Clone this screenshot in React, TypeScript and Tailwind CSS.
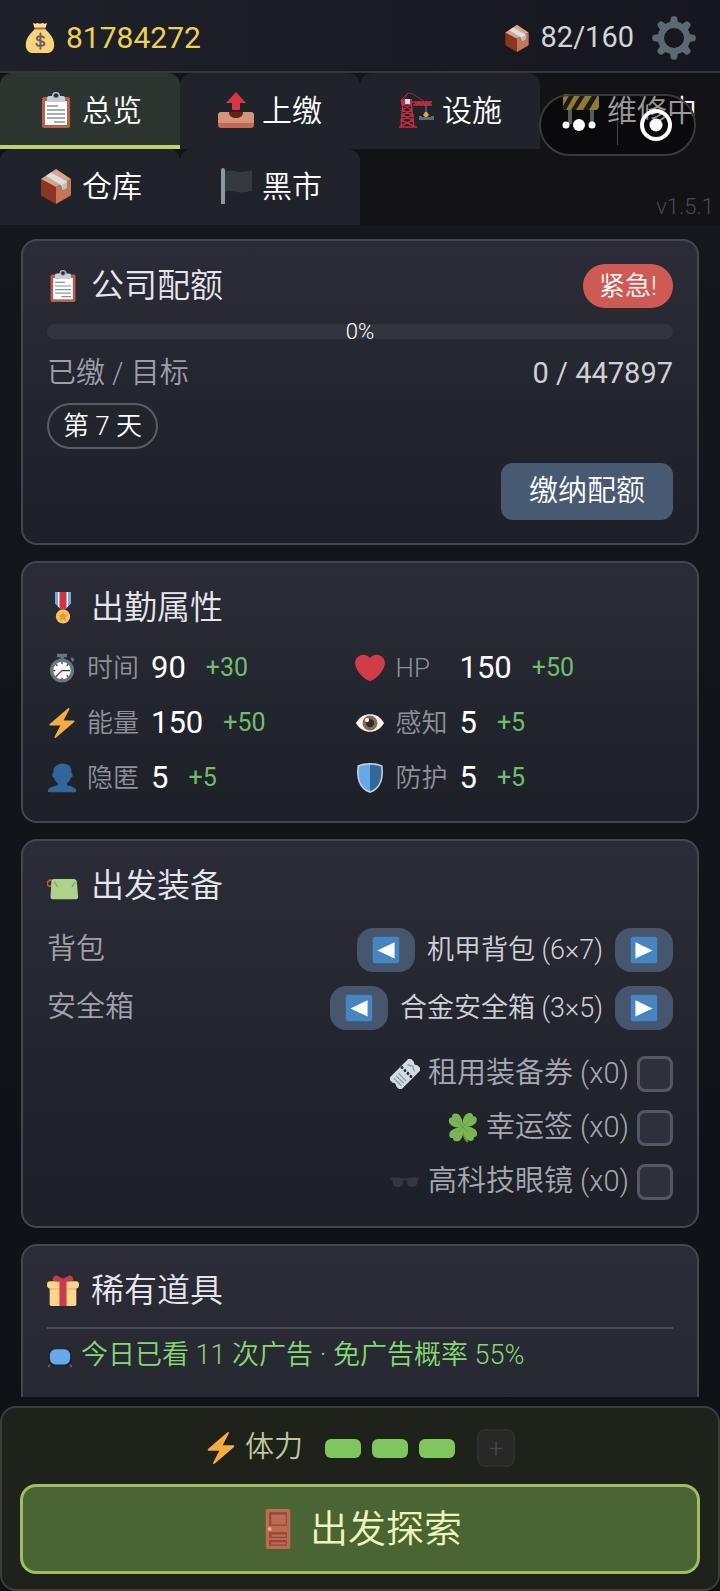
import type { ReactNode } from 'react';

type IconProps = { className?: string };

function Icon({ className = 'size-8', children }: IconProps & { children: ReactNode }) {
  return (
    <svg viewBox="0 0 36 36" className={`shrink-0 ${className}`} aria-hidden="true">
      {children}
    </svg>
  );
}

const MoneyBag = (p: IconProps) => (
  <Icon {...p}>
    <path fill="#F9D27E" d="M12 8C9 12 2 17 2 26c0 6 4 9 7 9h18c3 0 7-3 7-9 0-9-7-14-10-18z" />
    <path fill="#FFE0A0" d="M10 1l3 1 2-1 3 1 3-1 2 1 3-1-2 6H12z" />
    <path fill="#B5793C" d="M12 6h12v2.500H12z" />
    <path fill="none" stroke="#67645F" strokeWidth="2.200" strokeLinecap="round" d="M22.500 17.500c-1-2-8-2.500-8 1s8.500 2.200 8.500 5.800-8.500 3.400-9 .2M18.500 13v17" />
  </Icon>
);

const Package = (p: IconProps) => (
  <Icon {...p}>
    <path fill="#8A3624" d="M3 11l15 8v17L4 28c-.600-.4-1-1-1-2z" />
    <path fill="#C4765B" d="M33 11l-15 8v17l14-8c.6-.4 1-1 1-2z" />
    <path fill="#DDA283" d="M18 1l15 10-15 8L3 11z" />
    <path fill="#D6E0E8" d="M13 4.500L8 8l15 9 2 5 4-2.500v-6z" />
    <path fill="#B3C1CC" d="M24 17l5-3v5.500L25 22z" />
  </Icon>
);

const Gear = (p: IconProps) => (
  <Icon {...p}>
    <circle cx="18" cy="18" r="10.800" fill="none" stroke="#5C6973" strokeWidth="5.200" />
    {[0, 45, 90, 135, 180, 225, 270, 315].map((a) => (
      <path key={a} fill="#5C6973" d="M14.500 7l.8-5q.3-1.800 2-1.800h1.400q1.700 0 2 1.800l.8 5z" transform={`rotate(${a} 18 18)`} />
    ))}
  </Icon>
);

const Clipboard = (p: IconProps) => (
  <Icon {...p}>
    <rect x="4" y="5" width="28" height="31" rx="2" fill="#B86149" />
    <path fill="#fff" d="M7 9h22v24H7z" />
    <path fill="#C6CFD8" d="M25 4h-3a4 4 0 0 0-8 0h-3a2 2 0 0 0-2 2v4h18V6a2 2 0 0 0-2-2z" />
    <circle cx="18" cy="3.500" r="2.500" fill="#292F33" stroke="#8696A3" />
    <path stroke="#8395A3" strokeWidth="1.300" d="M9 14h11M9 18h18M9 22h18M9 26h18M16 30h11" />
  </Icon>
);

const Outbox = (p: IconProps) => (
  <Icon {...p}>
    <path fill="#D4937B" d="M0 23q0-3 3-3h30q3 0 3 3v10H0z" />
    <path fill="#BF6A52" d="M0 31h36v2q0 3-3 3H3q-3 0-3-3z" />
    <path fill="#662113" d="M11 20h14c0 4-3 6-7 6s-7-2-7-6z" />
    <path fill="#DA3446" d="M18 0l10 11h-6v6q0 1-1 1h-6q-1 0-1-1v-6H8z" />
  </Icon>
);

const Crane = (p: IconProps) => (
  <Icon {...p}>
    <path fill="none" stroke="#C42D3F" strokeWidth="1.400" d="M5 9L3 35M13 9l3 26M5 13l9 5M13 13l-9 5 11 5-12 5 13 6M14 18L4 23l11 5L3 34M5 10h29M15 13h19M17 10l2 3 2-3 2 3 2-3 2 3 2-3 2 3 2-3M1 35h18" />
    <path fill="none" stroke="#9B2A38" d="M5 9l5-8 5 1 12 8M10 1L2 9" />
    <path fill="#C42D3F" d="M3 7h11v6H3z" />
    <path fill="#D6DEE5" d="M7 7h5v5H7z" />
    <path stroke="#6B8294" d="M28 13v8" />
    <path fill="#E7A13D" d="M27 20h2l2 3-3 3-3-3z" />
    <path fill="#566B7B" d="M21 24h3v1h9v-1h3v4H21z" />
  </Icon>
);

const Barrier = (p: IconProps) => (
  <Icon {...p}>
    <path fill="#8899A6" d="M5 18h4v14H5zM27 18h4v14h-4z" />
    <rect y="2" width="36" height="16" rx="4" fill="#F2CC4D" />
    <path fill="#292F33" d="M7 2h5L3 18q-3-1-3-4zM18 2h5L13 18H8zM30 2h2q2 0 3 1l-9 15h-6z" />
  </Icon>
);

const BlackFlag = (p: IconProps) => (
  <Icon {...p}>
    <path fill="#8899A6" d="M3 2a2 2 0 0 1 4 0v33a1.500 1.500 0 0 1-4 0z" />
    <path fill="#34393D" d="M7 3c9-2 11 2 17 1 4-.6 6-1.500 10-2v21c-4 .4-6 1-10 1.500-6 .500-9-2.500-17-1z" />
  </Icon>
);

const Medal = (p: IconProps) => (
  <Icon {...p}>
    <path fill="#6BAEE5" d="M9 0h18v13l-6 6h-6l-6-6z" />
    <path fill="#fff" d="M12.500 0h11v16l-3 3h-5l-3-3z" />
    <path fill="#CF3547" d="M14 0h8v17l-1 2h-6l-1-2z" />
    <circle cx="18" cy="27.500" r="8" fill="#F7C263" />
    <path fill="#E59A3A" d="M18 22l1.600 3.700 4 .4-3 2.700.9 4-3.500-2.100-3.500 2.100.9-4-3-2.700 4-.4z" />
  </Icon>
);

const Stopwatch = (p: IconProps) => (
  <Icon {...p}>
    <path fill="#66757F" d="M12 1h12v4h-4v4h-4V5h-4zM28 7l2-2 3 3-2 3z" />
    <circle cx="18" cy="21" r="12.500" fill="#fff" stroke="#66757F" strokeWidth="4" />
    <path stroke="#292F33" strokeWidth="1.500" strokeLinecap="round" d="M18 21h9M18 11v1.500M18 30v1M8 21h1.500M11 14l1 1M25 14l-1 1M11 28l1-1M25 28l-1-1" />
    <path stroke="#DD2E44" strokeWidth="1.800" strokeLinecap="round" d="M18 21l-6 6" />
  </Icon>
);

const Heart = (p: IconProps) => (
  <Icon {...p}>
    <path fill="#D23B48" d="M35.885 11.833c0-5.45-4.418-9.868-9.867-9.868-3.308 0-6.227 1.633-8.018 4.129-1.791-2.496-4.71-4.129-8.017-4.129-5.45 0-9.868 4.417-9.868 9.868 0 .772.098 1.520.266 2.241C1.751 22.587 11.216 31.568 18 34.034c6.783-2.466 16.249-11.447 17.617-19.959.17-.721.268-1.469.268-2.242z" />
  </Icon>
);

const Bolt = (p: IconProps) => (
  <Icon {...p}>
    <path fill="#F7AC42" d="M32.938 15.651C32.792 15.260 32.418 15 32 15H19.925L26.890 1.458c.219-.426.106-.947-.271-1.243C26.437.071 26.218 0 26 0c-.233 0-.466.082-.653.243L18 6.588 3.347 19.243c-.316.273-.43.714-.284 1.105S3.582 21 4 21h12.075L9.110 34.542c-.219.426-.106.947.271 1.243.182.144.401.215.619.215.233 0 .466-.082.653-.243L18 29.412l14.653-12.655c.317-.273.43-.714.285-1.106z" />
  </Icon>
);

const Eye = (p: IconProps) => (
  <Icon {...p}>
    <path fill="#F5F3F1" d="M1 18C6 10 12 7.500 18 7.500S30 10 35 18c-5 8-11 10.500-17 10.500S6 26 1 18z" />
    <circle cx="18" cy="18" r="9" fill="#8A6A4F" />
    <circle cx="18" cy="18" r="5" fill="#292F33" />
    <circle cx="14.500" cy="14.500" r="2.500" fill="#F5F3F1" />
  </Icon>
);

const Person = (p: IconProps) => (
  <Icon {...p}>
    <path fill="#326599" d="M24 26.799v-2.566c2-1.348 4.080-3.779 4.703-6.896.186.103.206.17.413.17.991 0 1.709-1.287 1.709-2.873 0-1.562-.823-2.827-1.794-2.865.187-.674.293-1.577.293-2.735C29.324 5.168 26 .527 18.541.527c-6.629 0-10.777 4.641-10.777 8.507 0 1.123.069 2.043.188 2.755-.911.137-1.629 1.352-1.629 2.845 0 1.587.804 2.873 1.796 2.873.206 0 .025-.067.209-.17C8.952 20.453 11 22.885 13 24.232v2.414c-5 .645-12 3.437-12 6.230v1.061C1 35 2.076 35 3.137 35h29.725C33.924 35 35 35 35 33.938v-1.061c0-2.615-6-5.225-11-6.078z" />
  </Icon>
);

const Shield = (p: IconProps) => (
  <Icon {...p}>
    <path fill="#C3D3E0" d="M33 3C27 0 18 0 18 0S9 0 3 3C1 18 4 31 18 36 32 31 35 18 33 3z" />
    <path fill="#65A9E8" d="M18 34C7 29.500 3 20 4.700 4.400 10 2 18 2 18 2z" />
    <path fill="#336699" d="M18 34C29 29.500 33 20 31.300 4.400 26 2 18 2 18 2z" />
  </Icon>
);

const Backpack = (p: IconProps) => (
  <Icon {...p}>
    <path fill="none" stroke="#BF5B45" strokeWidth="1.800" d="M7 12c-5-2-8 2-6 5s5 0 6-3" />
    <path fill="#AFD28B" d="M5 12q.5-2 3-2h22q3 0 3.500 3L35 30q0 3-3 3H7q-3 0-3-3z" />
    <path fill="none" stroke="#7EA45A" strokeWidth="1.400" d="M8 13l4 6M32 13l-4 6" />
  </Icon>
);

const Ticket = (p: IconProps) => (
  <Icon {...p}>
    <g transform="rotate(-45 18 18)">
      <path fill="#D3DAE0" d="M1 8h33q2 0 2 2v5q-3 3 0 6v5q0 2-2 2H2q-2 0-2-2v-5q3-3 0-6v-5q0-2 2-2z" />
      <path fill="none" stroke="#8899A6" strokeWidth="1.500" d="M5 12v13M9 12v13M13 12v13M28 12l3 6-3 6" />
      <path stroke="#292F33" strokeWidth="3.500" strokeLinecap="round" strokeDasharray="0 5" d="M21 10v17" />
    </g>
  </Icon>
);

const Clover = (p: IconProps) => (
  <Icon {...p}>
    <path fill="none" stroke="#5C913B" strokeWidth="2.500" strokeLinecap="round" d="M18 18c0 7 1 12 5 16" />
    {[0, 90, 180, 270].map((a) => (
      <path key={a} fill="#7BB454" d="M18 18C8 18 1 15 1 9c0-3 2-4 4-4-.5-3 1-4.500 4-4.500C15 .5 18 8 18 18z" transform={`rotate(${a} 18 17)`} />
    ))}
    <path stroke="#5C913B" strokeWidth=".8" d="M18 17l-7-7M18 17l7-7M18 17l-7 7M18 17l7 7" />
  </Icon>
);

const Sunglasses = (p: IconProps) => (
  <Icon {...p}>
    <path fill="#34373E" d="M1 13q8-2 17 1 9-3 17-1v2l-2 1c0 6-2 8-6 8-5 0-7-3-7-8q-2-1-4 0c0 5-2 8-7 8-4 0-6-2-6-8l-2-1z" />
  </Icon>
);

const Gift = (p: IconProps) => (
  <Icon {...p}>
    <path fill="#FBD58B" d="M3 14h30v19q0 2-2 2H5q-2 0-2-2z" />
    <rect y="7" width="36" height="8" rx="3.500" fill="#FBD58B" />
    <path fill="#E8B96A" d="M3 15h30v1.500H3z" />
    <path fill="#C83A4D" d="M14 6h8v29h-8zM18 7C13 8 8 7 6 6c1-5 4-6 6-5 2 .8 5 3 6 3s4-2.200 6-3c2-1 5 0 6 5-2 1-7 2-12 1z" />
  </Icon>
);

const Television = (p: IconProps) => (
  <Icon {...p}>
    <path fill="#24262E" d="M2 8h32v25H2z" />
    <path fill="#59616C" d="M2 31h3l-1 4H1zM34 31h-3l1 4h3z" />
    <rect x="4" y="10" width="28" height="21" rx="8" fill="#67A9E9" />
  </Icon>
);

const Door = (p: IconProps) => (
  <Icon {...p}>
    <rect x="7" width="22" height="36" rx="1.500" fill="#BC6B55" />
    <path fill="#944737" d="M10 3h16v12H10zM10 21h16v5H10zM10 28h16v5H10z" />
    <path fill="#BC6B55" d="M12 5h13v9H12zM12 23h13v2H12zM12 30h13v2H12z" />
    <circle cx="10.500" cy="18" r="1.800" fill="#F5B34D" />
  </Icon>
);

const Arrow = ({ left }: { left?: boolean }) => (
  <Icon className="size-7">
    <rect x="1" y="1" width="34" height="34" rx="3" fill="#4685C0" />
    <path fill="#fff" d={left ? 'M29 8v21L7 18.500z' : 'M7 8v21l22-10.500z'} />
  </Icon>
);

const tabs = [
  { label: '总览', icon: Clipboard, state: 'active' },
  { label: '上缴', icon: Outbox, state: 'idle' },
  { label: '设施', icon: Crane, state: 'idle' },
  { label: '维修中', icon: Barrier, state: 'disabled' },
  { label: '仓库', icon: Package, state: 'idle' },
  { label: '黑市', icon: BlackFlag, state: 'idle' },
];

const tabStyles: Record<string, string> = {
  active: 'bg-[#2d3530] border-[#c3cf6d]',
  idle: 'bg-[#20232a] border-transparent',
  disabled: 'border-transparent',
};

const stats = [
  { label: '时间', value: 90, bonus: 30, icon: Stopwatch },
  { label: 'HP', value: 150, bonus: 50, icon: Heart },
  { label: '能量', value: 150, bonus: 50, icon: Bolt },
  { label: '感知', value: 5, bonus: 5, icon: Eye },
  { label: '隐匿', value: 5, bonus: 5, icon: Person },
  { label: '防护', value: 5, bonus: 5, icon: Shield },
];

const gear = [
  { label: '背包', value: '机甲背包 (6×7)' },
  { label: '安全箱', value: '合金安全箱 (3×5)' },
];

const extras = [
  { id: 'rental', label: '租用装备券 (x0)', icon: Ticket },
  { id: 'luck', label: '幸运签 (x0)', icon: Clover },
  { id: 'glasses', label: '高科技眼镜 (x0)', icon: Sunglasses },
];

function Card({ title, icon, badge, children }: { title: string; icon: ReactNode; badge?: ReactNode; children: ReactNode }) {
  return (
    <section className="shrink-0 rounded-2xl border-2 border-[#444652] bg-linear-to-b from-[#2b2c37] to-[#1d2027] px-6 pt-[23px] pb-[23px]">
      <div className="flex h-11 items-center justify-between">
        <h2 className="flex items-center gap-3 text-[33px] text-[#e6e7ee]">
          {icon}
          {title}
        </h2>
        {badge}
      </div>
      {children}
    </section>
  );
}

function Capsule() {
  return (
    <div className="absolute top-[94px] right-6 flex h-[62px] w-[157px] items-center rounded-full border-2 border-[#3a3a3d] bg-black/40">
      <button type="button" aria-label="更多" className="flex flex-1 justify-center">
        <svg viewBox="0 0 34 14" className="h-3.5 w-[34px]" fill="#fff">
          <circle cx="4" cy="7" r="3.500" />
          <circle cx="17" cy="7" r="6" />
          <circle cx="30" cy="7" r="3.500" />
        </svg>
      </button>
      <span className="h-10 w-px bg-white/25" />
      <button type="button" aria-label="关闭" className="flex flex-1 justify-center">
        <svg viewBox="0 0 32 32" className="size-8">
          <circle cx="16" cy="16" r="14" fill="none" stroke="#fff" strokeWidth="4" />
          <circle cx="16" cy="16" r="6.500" fill="#fff" />
        </svg>
      </button>
    </div>
  );
}

export default function App() {
  return (
    <div className="relative flex h-screen flex-col bg-linear-to-b from-[#17181d] to-[#0f1015] font-['Roboto','Noto_Sans_CJK_SC',sans-serif] font-[350] text-white">
      <header className="flex h-[73px] shrink-0 items-center justify-between border-b-2 border-[#35373d] bg-linear-to-r from-[#1e2128] to-[#16171e] px-6 pt-1 font-normal">
        <div className="flex items-center gap-2.5 text-[30px] text-[#f0cf55]">
          <MoneyBag />
          81784272
        </div>
        <div className="flex items-center gap-2.5 text-[29px] text-[#d2d4d9]">
          <Package className="size-7" />
          82/160
          <button type="button" aria-label="设置" className="ml-2">
            <Gear className="size-11" />
          </button>
        </div>
      </header>

      <nav className="relative grid shrink-0 grid-cols-4 bg-[#121217]">
        {tabs.map(({ label, icon: TabIcon, state }) => (
          <button
            key={label}
            type="button"
            disabled={state === 'disabled'}
            className={`flex h-[76px] items-center justify-center gap-2 rounded-t-xl border-b-4 pt-0.5 text-[30px] whitespace-nowrap ${tabStyles[state]}`}
          >
            <TabIcon className="size-9" />
            {label}
          </button>
        ))}
        <span className="absolute right-1.5 bottom-1 text-[22px] leading-7 text-[#4b4c52]">v1.5.1</span>
      </nav>
      <Capsule />

      <main className="flex min-h-0 flex-1 flex-col gap-4 overflow-y-auto px-[21px] pt-3.5 [scrollbar-width:none]">
        <Card
          title="公司配额"
          icon={<Clipboard className="size-8" />}
          badge={<span className="flex h-11 items-center rounded-full bg-[#cf5a55] px-4 text-[26px]">紧急!</span>}
        >
          <div role="progressbar" aria-valuenow={0} aria-label="公司配额" className="mt-4 flex h-[15px] items-center justify-center rounded-full bg-[#32343f] text-[22px]">
            0%
          </div>
          <div className="mt-3 flex justify-between text-[29px] leading-[44px] text-[#9c9ea8]">
            <span>已缴 / 目标</span>
            <span className="font-normal text-[#cfd0d7]">0 / 447897</span>
          </div>
          <span className="mt-2 flex h-[46px] w-fit items-center rounded-full border-2 border-[#5a5c66] px-3.5 text-[26px]">第 7 天</span>
          <div className="mt-3.5 flex justify-end">
            <button type="button" className="h-[57px] rounded-xl bg-[#485a72] px-7 text-[29px]">
              缴纳配额
            </button>
          </div>
        </Card>

        <Card title="出勤属性" icon={<Medal className="size-8" />}>
          <dl className="mt-[18px] grid grid-cols-[308fr_317fr] gap-y-[15px]">
            {stats.map(({ label, value, bonus, icon: StatIcon }) => (
              <div key={label} className="flex h-10 items-center">
                <StatIcon className="size-[30px]" />
                <dt className="ml-2.5 w-16 text-[26px] text-[#8f919b]">{label}</dt>
                <dd className="text-[31px] font-normal">{value}</dd>
                <dd className="ml-5 text-[25px] font-normal text-[#6fbe6c]">+{bonus}</dd>
              </div>
            ))}
          </dl>
        </Card>

        <Card title="出发装备" icon={<Backpack className="size-8" />}>
          <div className="mt-5 flex flex-col gap-3.5">
            {gear.map(({ label, value }) => (
              <div key={label} className="flex h-11 items-center justify-between">
                <span className="text-[29px] text-[#a0a1ab]">{label}</span>
                <div className="flex items-center gap-3 text-[27px] text-[#d0d1d8]">
                  <button type="button" aria-label={`上一个${label}`} className="flex h-11 w-[58px] items-center justify-center rounded-2xl bg-[#46566d]">
                    <Arrow left />
                  </button>
                  {value}
                  <button type="button" aria-label={`下一个${label}`} className="flex h-11 w-[58px] items-center justify-center rounded-2xl bg-[#46566d]">
                    <Arrow />
                  </button>
                </div>
              </div>
            ))}
          </div>
          <div className="mt-[23px] flex flex-col items-end gap-3">
            {extras.map(({ id, label, icon: ExtraIcon }) => (
              <label key={id} htmlFor={id} className="flex h-[42px] items-center gap-2 text-[29px] text-[#a6a8b3]">
                <ExtraIcon className="size-[30px]" />
                {label}
                <input id={id} type="checkbox" className="size-9 appearance-none rounded-lg border-[3px] border-[#555863] bg-[#2e303c] checked:bg-[#7ec65c]" />
              </label>
            ))}
          </div>
        </Card>

        <Card title="稀有道具" icon={<Gift className="size-8" />}>
          <p className="mt-3.5 flex items-center gap-2 border-t-2 border-[#4a4c58] pt-2 pb-72 text-[27px] leading-9 text-[#86d873]">
            <Television className="size-[26px]" />
            今日已看 11 次广告 · 免广告概率 55%
          </p>
        </Card>
      </main>

      <footer className="mt-[9px] shrink-0 rounded-2xl border-2 border-[#3c3f31] bg-[#1f211b] px-[18px] pt-[21px] pb-[15px]">
        <div className="flex h-[38px] items-center justify-center text-[29px] text-[#c0c79b]">
          <Bolt className="size-8" />
          <span className="ml-2">体力</span>
          <div className="mx-[22px] flex gap-[11px]">
            {[1, 2, 3].map((n) => (
              <span key={n} className="h-[19px] w-9 rounded-md bg-[#7fc75d]" />
            ))}
          </div>
          <button type="button" aria-label="补充体力" className="flex size-[38px] items-center justify-center rounded-lg border-2 border-[#2e2e2d] bg-[#282828] text-[26px] text-[#464646]">
            +
          </button>
        </div>
        <button type="button" className="mt-[17px] flex h-[90px] w-full items-center justify-center gap-3 rounded-2xl border-3 border-[#a0bd62] bg-[#4b6434] text-[38px] text-[#edf7bd]">
          <Door className="size-10" />
          出发探索
        </button>
      </footer>
    </div>
  );
}
